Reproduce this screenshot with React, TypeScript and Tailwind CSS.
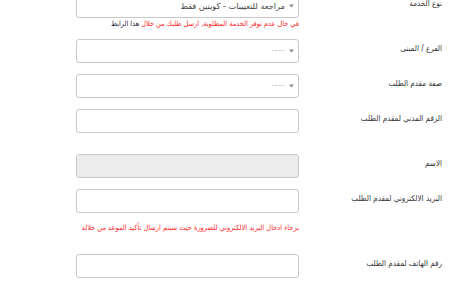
import React from "react";

const font = { fontFamily: '"DejaVu Sans", sans-serif' };
const cond = { fontFamily: '"DejaVu Sans Condensed", "DejaVu Sans", sans-serif' };

function Caret() {
  return (
    <svg width="5" height="4" viewBox="0 0 5 4" className="shrink-0">
      <path d="M0 0.5 L5 0.5 L2.5 3.5 Z" fill="#888" />
    </svg>
  );
}

function SelectBox({ text, placeholder }: { text: string; placeholder?: boolean }) {
  return (
    <div className="h-[24px] w-[223px] border border-[#c8c8c8] rounded-[3px] bg-white flex items-center justify-start pr-[4px] gap-[4px]">
      <Caret />
      <span className={placeholder ? "text-[#b5b5b5] text-[8px] tracking-[0.5px]" : "text-[#444] text-[8.2px]"}>{text}</span>
    </div>
  );
}

function InputBox({ gray }: { gray?: boolean }) {
  return (
    <div className={"h-[24px] w-[223px] border border-[#c8c8c8] rounded-[3px] " + (gray ? "bg-[#ececec]" : "bg-white")} />
  );
}

function Row({ label, children, className }: { label: string; children: React.ReactNode; className?: string }) {
  return (
    <div className={"flex items-start " + (className || "")}>
      <div className="w-[143px] shrink-0 text-[8px] leading-[18px] pt-[1px] text-[#333]" style={cond}>{label}</div>
      <div className="w-[223px] shrink-0">{children}</div>
    </div>
  );
}

export default function App() {
  return (
    <div dir="rtl" className="w-[475px] h-[300px] overflow-hidden bg-white" style={font}>
      <div className="pr-[33px] mt-[-6px]">
        <Row label="نوع الخدمة">
          <SelectBox text="مراجعة للتعيينات - كويتين فقط" />
          <div className="text-[7.3px] leading-[12px] mb-[9px] whitespace-nowrap" style={cond}>
            <span className="text-[#ff2a2a]">في حال عدم توفر الخدمة المطلوبة, ارسل طلبك من خلال </span>
            <span className="text-[#22223a]">هذا الرابط</span>
          </div>
        </Row>
        <Row label="الفرع / المبنى" className="mb-[11px]">
          <SelectBox text="----" placeholder />
        </Row>
        <Row label="صفة مقدم الطلب" className="mb-[11px]">
          <SelectBox text="----" placeholder />
        </Row>
        <Row label="الرقم المدني لمقدم الطلب" className="mb-[21px]">
          <InputBox />
        </Row>
        <Row label="الاسم" className="mb-[11px]">
          <InputBox gray />
        </Row>
        <Row label="البريد الالكتروني لمقدم الطلب">
          <InputBox />
          <div className="mt-[9px] mb-[20px] text-[7.4px] leading-[12px] text-[#ff2a2a] whitespace-nowrap" style={cond}>
            برجاء ادخال البريد الالكتروني للضرورة حيث سيتم ارسال تأكيد الموعد من خلاله
          </div>
        </Row>
        <Row label="رقم الهاتف لمقدم الطلب">
          <InputBox />
        </Row>
      </div>
    </div>
  );
}
